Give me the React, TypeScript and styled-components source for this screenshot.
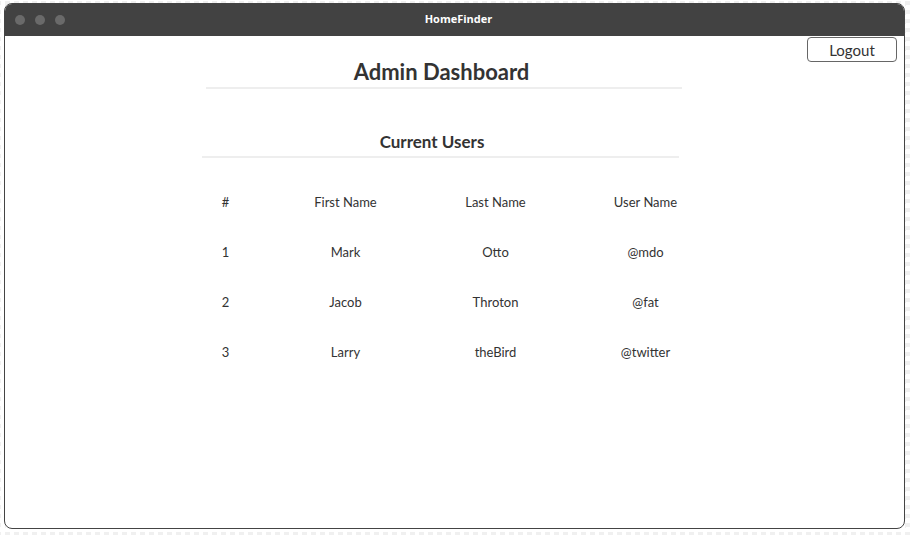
import React from 'react'
import styled, { createGlobalStyle } from 'styled-components'

const GlobalStyle = createGlobalStyle`
  html, body {
    margin: 0;
    padding: 0;
  }
  body {
    width: 912px;
    height: 535px;
    overflow: hidden;
    font-family: Lato, 'Noto Sans', sans-serif;
    color: #333;
    background: #fff;
  }
`

const users = [
  { id: 1, first: 'Mark', last: 'Otto', handle: '@mdo' },
  { id: 2, first: 'Jacob', last: 'Throton', handle: '@fat' },
  { id: 3, first: 'Larry', last: 'theBird', handle: '@twitter' },
]

export default function App() {
  return (
    <>
      <GlobalStyle />
      <Page>
        <Window>
          <TitleBar>
            <Dots>
              <Dot />
              <Dot />
              <Dot />
            </Dots>
            <WindowTitle>HomeFinder</WindowTitle>
          </TitleBar>
          <Content>
            <LogoutButton>Logout</LogoutButton>
            <Main>
              <PageTitle>Admin Dashboard</PageTitle>
              <SectionTitle>Current Users</SectionTitle>
              <UserTable>
                <Cell>#</Cell>
                <Cell>First Name</Cell>
                <Cell>Last Name</Cell>
                <Cell>User Name</Cell>
                {users.map((u) => (
                  <React.Fragment key={u.id}>
                    <Cell>{u.id}</Cell>
                    <Cell>{u.first}</Cell>
                    <Cell>{u.last}</Cell>
                    <Cell>{u.handle}</Cell>
                  </React.Fragment>
                ))}
              </UserTable>
            </Main>
          </Content>
        </Window>
      </Page>
    </>
  )
}

// checker backdrop behind the window, like the mockup canvas
const Page = styled.div`
  width: 912px;
  height: 535px;
  padding: 3px 7px 6px 4px;
  box-sizing: border-box;
  background: conic-gradient(#f0f0f0 25%, transparent 0) 1px 1px / 9px 9px;
`

const Window = styled.div`
  width: 901px;
  height: 526px;
  display: flex;
  flex-direction: column;
  background: #fff;
  border-radius: 8px;
  overflow: hidden;
  box-sizing: border-box;
  border: 1px solid #444;
`

const TitleBar = styled.div`
  height: 32px;
  flex: none;
  background: #424242;
  display: flex;
  align-items: center;
  position: relative;
`

const Dots = styled.div`
  display: flex;
  gap: 10px;
  padding-left: 10px;
`

const Dot = styled.span`
  width: 10px;
  height: 10px;
  border-radius: 50%;
  background: #6a6a6a;
`

const WindowTitle = styled.div`
  position: absolute;
  left: 0;
  right: 0;
  top: 7px;
  text-align: center;
  color: #fff;
  font-size: 11px;
  font-weight: 700;
  font-family: 'Open Sans', Lato, sans-serif;
  padding-left: 8px;
`

const Content = styled.div`
  flex: 1;
  position: relative;
  display: flex;
  justify-content: center;
  padding-right: 22px;
`

const LogoutButton = styled.button`
  position: absolute;
  top: 1px;
  right: 7px;
  width: 90px;
  height: 25px;
  background: #fff;
  border: 1px solid #666;
  border-radius: 4px;
  font-family: Lato, 'Noto Sans', sans-serif;
  font-size: 15px;
  color: #333;
  padding: 0;
`

const Main = styled.div`
  width: 476px;
  display: flex;
  flex-direction: column;
  align-items: stretch;
`

const PageTitle = styled.h1`
  margin: 22px 0 0;
  padding: 0 4px 1px 0;
  font-size: 22px;
  line-height: 28px;
  font-weight: 700;
  text-align: center;
  border-bottom: 2px solid #eee;
`

const SectionTitle = styled.h2`
  margin: 42px 3px 0 -4px;
  padding: 0 16px 3px 0;
  font-size: 17px;
  line-height: 22px;
  font-weight: 700;
  text-align: center;
  border-bottom: 2px solid #eee;
`

const UserTable = styled.div`
  display: grid;
  grid-template-columns: 90px 150px 150px 150px;
  grid-auto-rows: 50px;
  margin: 19px 0 0 -25px;
`

const Cell = styled.div`
  display: flex;
  align-items: center;
  justify-content: center;
  font-size: 13px;
  color: #333;
`
